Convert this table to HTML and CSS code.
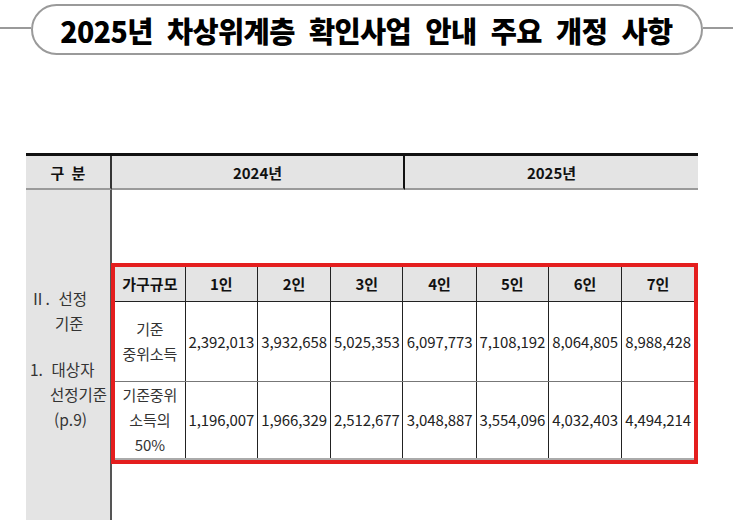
FILE: index.html
```html
<!DOCTYPE html>
<html lang="ko">
<head>
<meta charset="utf-8">
<link rel="stylesheet" href="styles.css">
</head>
<body>
<header class="title-row">
  <span class="rule"></span>
  <h1 class="pill"><span class="title-text">2025년 차상위계층 확인사업 안내 주요 개정 사항</span></h1>
  <span class="rule"></span>
</header>

<section class="sheet">
  <div class="hcell hcell-first">구 분</div>
  <div class="hcell hcell-mid">2024년</div>
  <div class="hcell">2025년</div>

  <div class="side">
    <p class="l1">Ⅱ.&nbsp; 선정</p>
    <p class="l2">기준</p>
    <p class="l3">1.&nbsp; 대상자</p>
    <p class="l4">선정기준</p>
    <p class="l5">(p.9)</p>
  </div>
  <div class="body">
    <div class="redbox">
      <table class="inc">
        <colgroup>
          <col class="c0"><col class="c1"><col class="c2"><col class="c1"><col class="c2"><col class="c1"><col class="c2"><col class="c1">
        </colgroup>
        <thead>
          <tr>
            <th>가구규모</th><th>1인</th><th>2인</th><th>3인</th><th>4인</th><th>5인</th><th>6인</th><th>7인</th>
          </tr>
        </thead>
        <tbody>
          <tr class="r1">
            <td class="lab">기준<br>중위소득</td>
            <td>2,392,013</td><td>3,932,658</td><td>5,025,353</td><td>6,097,773</td><td>7,108,192</td><td>8,064,805</td><td>8,988,428</td>
          </tr>
          <tr class="r2">
            <td class="lab">기준중위<br>소득의<br>50%</td>
            <td>1,196,007</td><td>1,966,329</td><td>2,512,677</td><td>3,048,887</td><td>3,554,096</td><td>4,032,403</td><td>4,494,214</td>
          </tr>
        </tbody>
      </table>
    </div>
  </div>
</section>
</body>
</html>
```

FILE: styles.css
```css
* { box-sizing: border-box; }
html, body { margin: 0; padding: 0; background: #fff; }
body {
  width: 733px;
  height: 520px;
  overflow: hidden;
  font-family: "Noto Sans CJK KR", "Noto Sans", sans-serif;
  color: #222;
}

.title-row {
  display: flex;
  align-items: flex-start;
  padding-top: 4px;
}
.rule {
  flex: 1;
  height: 2px;
  background: #9a9a9a;
  margin-top: 23px;
}
.pill {
  margin: 0;
  width: 672px;
  height: 51px;
  border: 2px solid #9a9a9a;
  border-radius: 26px;
  display: flex;
  align-items: center;
  justify-content: center;
  font-size: 29px;
  font-weight: 900;
  color: #000;
  line-height: 1;
  padding-top: 2px;
}
.title-text {
  display: inline-block;
  letter-spacing: -0.6px;
  word-spacing: 7px;
  transform: scaleX(0.98);
  white-space: nowrap;
}

.sheet {
  margin: 98px 0 0 26px;
  width: 672px;
  display: grid;
  grid-template-columns: 86px 293px 293px;
  grid-template-rows: 34px 1fr;
  border-top: 3px solid #111;
  height: 367px;
}
.hcell {
  background: #e4e4e4;
  border-bottom: 2px solid #9a9a9a;
  display: flex;
  align-items: center;
  justify-content: center;
  font-size: 15px;
  font-weight: 700;
  color: #111;
}
.hcell-first { border-right: 2px solid #333; word-spacing: 3px; }
.hcell-mid { border-right: 2px solid #111; }

.side {
  background: #e4e4e4;
  border-right: 2px solid #555;
  font-size: 15.5px;
  color: #333;
  padding-top: 96px;
}
.side p { margin: 0; line-height: 25px; white-space: nowrap; }
.side .l1 { padding-left: 4px; }
.side .l2 { padding-left: 29px; }
.side .l3 { padding-left: 4px; margin-top: 21px; }
.side .l4 { padding-left: 24px; }
.side .l5 { padding-left: 28px; }

.body {
  grid-column: 2 / 4;
  padding-top: 73px;
  margin-left: -1px;
}
.redbox {
  border: 4px solid #e41e1e;
  width: 587px;
}
.inc {
  border-collapse: collapse;
  width: 100%;
  table-layout: fixed;
  font-size: 15px;
}
.inc .c0 { width: 70px; }
.inc .c1 { width: 72px; }
.inc .c2 { width: 73px; }
.inc th, .inc td {
  border: 1px solid #222;
  text-align: center;
  padding: 0;
  white-space: nowrap;
}
.inc tr > :first-child { border-left: none; }
.inc tr > :last-child { border-right: none; }
.inc thead th {
  border-top: none;
  background: #e4e4e4;
  height: 34px;
  font-weight: 700;
  color: #111;
}
.inc tbody td { color: #222; letter-spacing: -0.1px; }
.inc .r1 td { height: 80px; border-bottom-color: #777; }
.inc .r2 td { height: 78px; border-bottom: 2px solid #aaa; }
.inc td.lab { line-height: 25px; color: #333; }
```
